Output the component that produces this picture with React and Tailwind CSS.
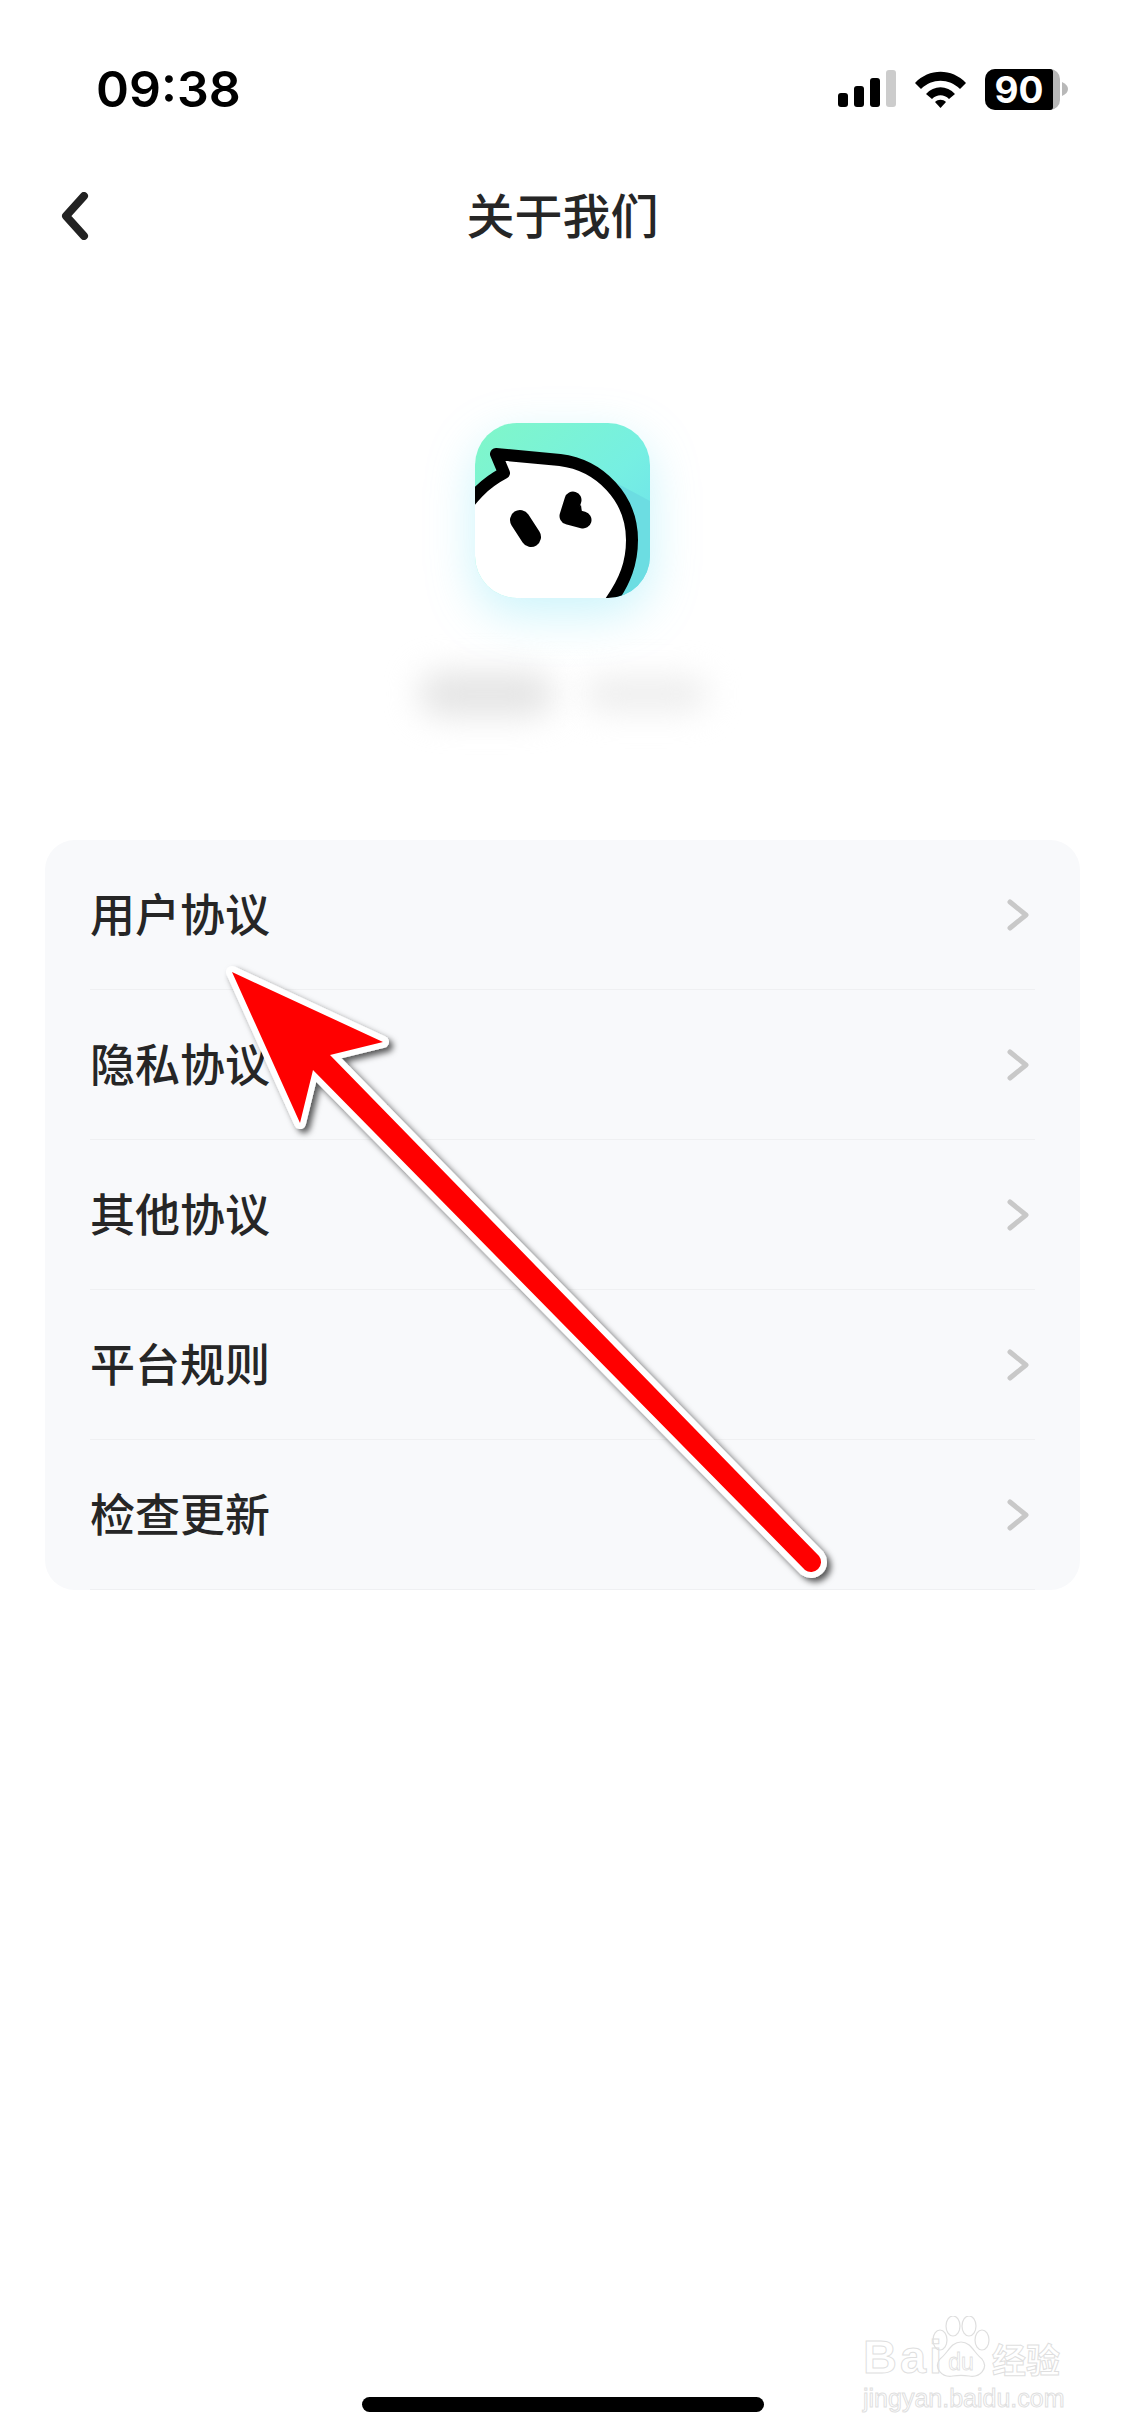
const rows = ["用户协议", "隐私协议", "其他协议", "平台规则", "检查更新"];
const cjk = "font-['Noto_Sans_CJK_SC','Noto_Sans',sans-serif]";

function StatusIcons() {
  return (
    <div className="flex items-center">
      <svg width="58" height="40" viewBox="0 0 58 40" className="mr-[19px]">
        <rect x="0" y="24" width="10" height="14" rx="3" fill="#000" />
        <rect x="16" y="17" width="10" height="21" rx="3" fill="#000" />
        <rect x="32" y="9" width="10" height="29" rx="3" fill="#000" />
        <rect x="48" y="1" width="10" height="37" rx="3" fill="#ccc" />
      </svg>
      <svg width="51" height="40" viewBox="0 0 51 40" className="mr-[19px]">
        <path d="M0 14 C14 -1 37 -1 51 14 L45 20 C34 9 17 9 6 20 Z" fill="#000" />
        <path d="M11 25 C19 16 32 16 40 25 L34 30 C29 25 22 25 17 30 Z" fill="#000" />
        <path d="M20 33 C23 30 28 30 31 33 L25.500 39 Z" fill="#000" />
      </svg>
      <div className="flex h-[41px] w-[75px] items-center rounded-[10px] bg-[#b8b8b8]">
        <div className="flex h-full w-[68px] items-center justify-center rounded-l-[10px] rounded-r-[3px] bg-black font-['Inter',sans-serif] text-[37px] font-bold leading-[41px] text-white">
          90
        </div>
      </div>
      <svg width="7" height="14" viewBox="0 0 7 14" className="ml-[2px]">
        <path d="M0 0 C4 2 6 4 6 7 C6 10 4 12 0 14 Z" fill="#b8b8b8" />
      </svg>
    </div>
  );
}

function Logo() {
  return (
    <div className="h-[175px] w-[175px] rounded-[42px] shadow-[0_16px_48px_rgba(110,225,245,0.36)]">
      <svg width="175" height="175" viewBox="0 0 175 175" className="block">
        <defs>
          <linearGradient id="lg" x1="0" y1="0" x2="1" y2="1">
            <stop offset="0" stopColor="#80f7c8" />
            <stop offset="0.55" stopColor="#76efe2" />
            <stop offset="1" stopColor="#6bdcf0" />
          </linearGradient>
          <clipPath id="cl"><rect width="175" height="175" rx="42" /></clipPath>
        </defs>
        <g clipPath="url(#cl)">
          <rect width="175" height="175" fill="url(#lg)" />
          <path d="M132 55 L175 78 L175 175 L140 175 Z" fill="#6cdde2" />
          <path d="M-20 102 C-5 74 10 60 29 50 L21 31 L85 37 C125 42 157 75 157 117 C157 140 150 158 136 178 L120 200 L-20 200 Z" fill="#fff" stroke="#000" strokeWidth="12" strokeLinejoin="round" />
          <line x1="45" y1="97" x2="56" y2="114" stroke="#000" strokeWidth="20" strokeLinecap="round" />
          <path d="M98 77 L93 93 L108 97" fill="none" stroke="#000" strokeWidth="17" strokeLinecap="round" strokeLinejoin="round" />
          <path d="M93 93 L106 82 L108 97 Z" fill="#000" />
        </g>
      </svg>
    </div>
  );
}

function Arrow() {
  const d = "M232 72 L383 142 L330 155 L819 656 A10 10 0 0 1 805 670 L313 170 L300 223 Z";
  return (
    <svg width="1125" height="800" viewBox="0 0 1125 800" className="absolute left-0 top-[900px]">
      <defs>
        <filter id="sh" x="-10%" y="-10%" width="120%" height="120%">
          <feDropShadow dx="4" dy="4" stdDeviation="3" floodColor="#000" floodOpacity="0.65" />
        </filter>
      </defs>
      <path d={d} fill="#fff" stroke="#fff" strokeWidth="12" strokeLinejoin="round" filter="url(#sh)" />
      <path d={d} fill="#f00" />
    </svg>
  );
}

function Watermark() {
  const outline = "text-transparent [-webkit-text-stroke:1px_#dfdfdf] font-['Liberation_Sans','Noto_Sans_CJK_SC',sans-serif]";
  return (
    <div className="absolute left-[863px] top-[2316px] flex w-[206px] flex-col">
      <div className="flex h-[62px] items-end">
        <span className={`${outline} w-[69px] text-[47px] font-bold leading-[42px] tracking-[3px]`}>Bai</span>
        <svg width="58" height="62" viewBox="0 0 58 62" className="shrink-0">
          <g fill="none" stroke="#dfdfdf" strokeWidth="1.2">
            <ellipse cx="8" cy="24" rx="7" ry="10" />
            <ellipse cx="21" cy="10" rx="7" ry="10" />
            <ellipse cx="37" cy="10" rx="7" ry="10" />
            <ellipse cx="50" cy="24" rx="7" ry="10" />
            <path d="M29 26 C39 26 42 37 50 43 C57 52 48 62 37 60 C31 59 27 59 21 60 C10 62 1 52 8 43 C16 37 19 26 29 26 Z" />
            <text x="29" y="54" textAnchor="middle" fontSize="23" fontFamily="Liberation Sans, sans-serif" strokeWidth="0.8">du</text>
          </g>
        </svg>
        <span className={`${outline} ml-[2px] text-[34px] font-bold leading-[38px] ${cjk}`}>经验</span>
      </div>
      <span className={`${outline} mt-[6px] text-[25px] leading-[28px] [-webkit-text-stroke-width:0.8px]`}>jingyan.baidu.com</span>
    </div>
  );
}

export default function App() {
  return (
    <div className={`relative h-[2436px] w-[1125px] overflow-hidden bg-white ${cjk}`}>
      <div className="flex h-[146px] items-center justify-between pl-[96px] pr-[56px] pt-[32px]">
        <span className="font-['Inter',sans-serif] text-[50px] font-semibold leading-none text-black">09:38</span>
        <StatusIcons />
      </div>

      <div className="relative flex h-[140px] items-center justify-center pb-[7px]">
        <svg width="32" height="48" viewBox="0 0 32 48" className="absolute left-[59px] top-[46px]">
          <path d="M25 4 L7 24 L25 44" fill="none" stroke="#222" strokeWidth="8" strokeLinecap="round" strokeLinejoin="round" />
        </svg>
        <span className="text-[48px] font-medium leading-none text-[#262626]">关于我们</span>
      </div>

      <div className="mt-[137px] flex flex-col items-center">
        <Logo />
        <div className="mt-[56px] flex h-[80px] w-[300px] items-center justify-between px-[6px]">
          <div className="h-[44px] w-[135px] rounded-full bg-[#e4e4e4] blur-[16px]" />
          <div className="h-[32px] w-[122px] rounded-full bg-[#ececec] blur-[16px]" />
        </div>
      </div>

      <div className="mx-[45px] mt-[106px] rounded-[30px] bg-[#f8f9fb]">
        {rows.map((t) => (
          <div key={t} className="mx-[45px] flex h-[150px] items-center justify-between border-b border-[#eff0f2]">
            <span className="pb-[5px] text-[45px] font-medium leading-none text-[#262626]">{t}</span>
            <svg width="24" height="34" viewBox="0 0 24 34" className="mr-[5px]">
              <path d="M4 4 L20 17 L4 30" fill="none" stroke="#c8c8c8" strokeWidth="5" strokeLinecap="round" strokeLinejoin="round" />
            </svg>
          </div>
        ))}
      </div>

      <Arrow />
      <Watermark />
      <div className="absolute bottom-[24px] left-[362px] h-[15px] w-[402px] rounded-full bg-black" />
    </div>
  );
}
